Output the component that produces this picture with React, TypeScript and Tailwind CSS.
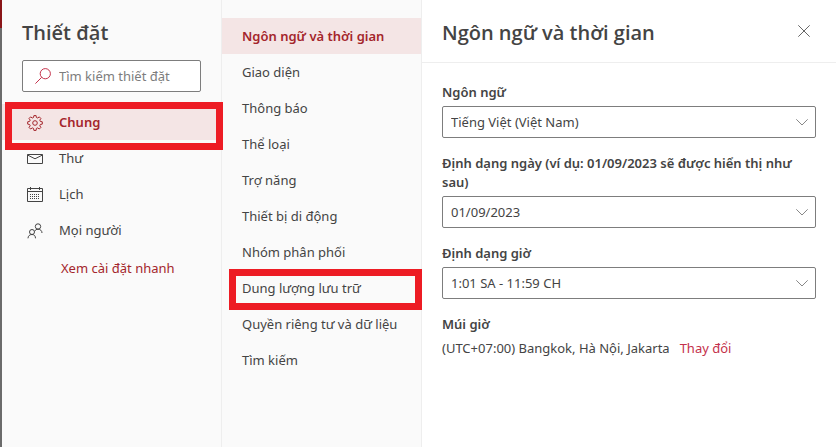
import React, { useState } from 'react';
import clsx from 'clsx';

type IconProps = { className?: string };

const GearIcon = ({ className }: IconProps) => (
  <svg className={className} width="16" height="16" viewBox="0 0 16 16" fill="none" stroke="currentColor" strokeWidth="1" strokeLinejoin="round">
    <path d="M6.900.6h2.200l.3 1.900 1.300.5 1.600-1.100 1.600 1.600-1.100 1.600.5 1.300 2 .4v2.300l-2 .4-.5 1.300 1.100 1.600-1.600 1.600-1.600-1.100-1.300.5-.3 2H6.900l-.4-2-1.200-.5L3.600 14 2 12.400l1.200-1.600-.6-1.300-1.900-.4V6.800l1.900-.4.6-1.300L2 3.500l1.600-1.600L5.300 3l1.200-.5z" />
    <circle cx="8" cy="8" r="2.3" />
  </svg>
);

const MailIcon = ({ className }: IconProps) => (
  <svg className={className} width="16" height="16" viewBox="0 0 16 16" fill="none" stroke="currentColor" strokeWidth="1">
    <path d="M.5 3.500h15v9H.5zM.5 4 8 7.800 15.500 4" />
  </svg>
);

const CalendarIcon = ({ className }: IconProps) => (
  <svg className={className} width="16" height="16" viewBox="0 0 16 16" fill="none" stroke="currentColor" strokeWidth="1">
    <path d="M.5 1.500h15v13H.5zM.5 4.500h15M3.500 0v3M12.500 0v3" />
    <path d="M3 7.500h10M3 9.500h10M3 11.500h10" strokeDasharray="1 1" />
  </svg>
);

const PeopleIcon = ({ className }: IconProps) => (
  <svg className={className} width="16" height="16" viewBox="0 0 16 16" fill="none" stroke="currentColor" strokeWidth="1">
    <circle cx="11" cy="3.500" r="2.700" />
    <circle cx="5" cy="9" r="2.500" />
    <path d="M1 15.300c0-2.300 1.700-3.800 4-3.800s3.500 1.500 3.500 3.800M7.800 8.200C8.300 6.900 9.500 6.200 11 6.200c2.300 0 4 1.500 4 3.800" />
  </svg>
);

const SearchIcon = ({ className }: IconProps) => (
  <svg className={className} width="16" height="16" viewBox="0 0 16 16" fill="none" stroke="currentColor" strokeWidth="1">
    <circle cx="10.300" cy="5.700" r="5.100" />
    <path d="M6.700 9.300.4 15.600" />
  </svg>
);

const ChevronIcon = ({ className }: IconProps) => (
  <svg className={className} width="12" height="12" viewBox="0 0 12 12" fill="none" stroke="currentColor" strokeWidth="1">
    <path d="M.3 3.300 6 9l5.700-5.700" />
  </svg>
);

const CloseIcon = ({ className }: IconProps) => (
  <svg className={className} width="12" height="12" viewBox="0 0 12 12" fill="none" stroke="currentColor" strokeWidth="1">
    <path d="M.3.3l11.400 11.400M11.700.3.3 11.700" />
  </svg>
);

const categories = [
  { name: 'Chung', Icon: GearIcon },
  { name: 'Thư', Icon: MailIcon },
  { name: 'Lịch', Icon: CalendarIcon },
  { name: 'Mọi người', Icon: PeopleIcon },
];

const sections = [
  'Ngôn ngữ và thời gian',
  'Giao diện',
  'Thông báo',
  'Thể loại',
  'Trợ năng',
  'Thiết bị di động',
  'Nhóm phân phối',
  'Dung lượng lưu trữ',
  'Quyền riêng tư và dữ liệu',
  'Tìm kiếm',
];

const fields = [
  { id: 'language', label: 'Ngôn ngữ', value: 'Tiếng Việt (Việt Nam)' },
  { id: 'date', label: 'Định dạng ngày (ví dụ: 01/09/2023 sẽ được hiển thị như sau)', value: '01/09/2023' },
  { id: 'time', label: 'Định dạng giờ', value: '1:01 SA - 11:59 CH' },
];

export default function App() {
  const [category, setCategory] = useState('Chung');
  const [section, setSection] = useState(sections[0]);

  return (
    <div className="flex min-h-screen bg-white font-['Noto_Sans','Open_Sans',sans-serif] text-[13px] text-[#444]">
      {/* Edge of the page behind the panel */}
      <div className="flex w-[2px] shrink-0 flex-col bg-[#6b6b6b]">
        <div className="h-7 bg-[#8a1518]" />
      </div>

      <aside className="w-[220px] shrink-0 border-r border-[#eee] bg-[#fafafa] pt-[18px]">
        <h1 className="px-5 font-['Open_Sans','Noto_Sans',sans-serif] text-[20px] leading-[30px] font-semibold">
          Thiết đặt
        </h1>
        <label className="mx-5 mt-3 flex h-8 items-center gap-2 rounded-xs border border-[#7d7d7d] bg-white pl-3">
          <SearchIcon className="shrink-0 text-[#c4314b]" />
          <input
            type="text"
            aria-label="Tìm kiếm thiết đặt"
            placeholder="Tìm kiếm thiết đặt"
            className="w-full min-w-0 bg-transparent pt-px outline-none placeholder:text-[#7d7d7d]"
          />
        </label>

        <ul className="mt-3">
          {categories.map(({ name, Icon }) => (
            <li key={name} className="relative">
              <button
                onClick={() => setCategory(name)}
                className={clsx(
                  'flex h-9 w-full items-center gap-4 pt-0.5 pl-[25px]',
                  category === name && 'bg-[#f4e5e5] font-semibold text-[#a4262c]'
                )}
              >
                <Icon className="shrink-0" />
                {name}
              </button>
              {name === 'Chung' && (
                <div className="pointer-events-none absolute -top-[2px] -right-[2px] -bottom-[10px] left-[3px] z-10 border-7 border-[#ed1c24]" />
              )}
            </li>
          ))}
        </ul>
        <a href="#quick" className="mt-[10px] ml-[59px] inline-block leading-5 text-[#a4262c]">
          Xem cài đặt nhanh
        </a>
      </aside>

      <nav className="w-[200px] shrink-0 border-r border-[#eee] bg-[#fafafa] pt-[18px]">
        <ul>
          {sections.map((name) => (
            <li key={name} className="relative">
              <button
                onClick={() => setSection(name)}
                className={clsx(
                  'flex h-9 w-full items-center pt-0.5 pl-5 whitespace-nowrap',
                  section === name && 'bg-[#f4e5e5] font-semibold text-[#a4262c]'
                )}
              >
                {name}
              </button>
              {name === 'Dung lượng lưu trữ' && (
                <div className="pointer-events-none absolute -top-px -right-px -bottom-1 left-[7px] z-10 border-7 border-[#ed1c24]" />
              )}
            </li>
          ))}
        </ul>
      </nav>

      <main className="min-w-0 flex-1">
        <header className="flex items-start justify-between border-b border-[#eee] pt-[18px] pr-[26px] pb-[14px] pl-5">
          <h2 className="font-['Open_Sans','Noto_Sans',sans-serif] text-[20px] leading-[30px] font-semibold">
            {section}
          </h2>
          <button aria-label="Đóng" className="pt-[7px] text-[#666]">
            <CloseIcon />
          </button>
        </header>

        <div className="flex flex-col gap-4 px-5 pt-5">
          {fields.map((field) => (
            <div key={field.id}>
              <label htmlFor={field.id} className="mb-1 block leading-[19px] font-semibold">
                {field.label}
              </label>
              <div className="relative">
                <select
                  id={field.id}
                  className="block h-8 w-full appearance-none rounded-xs border border-[#7d7d7d] bg-white pt-px pr-8 pl-2 outline-none"
                >
                  <option>{field.value}</option>
                </select>
                <ChevronIcon className="pointer-events-none absolute top-[10px] right-2 text-[#888]" />
              </div>
            </div>
          ))}
          <div>
            <h3 className="mb-[5px] leading-[19px] font-semibold">Múi giờ</h3>
            <p className="leading-[19px]">
              (UTC+07:00) Bangkok, Hà Nội, Jakarta
              <a href="#timezone" className="ml-[10px] text-[#c4314b]">
                Thay đổi
              </a>
            </p>
          </div>
        </div>
      </main>
    </div>
  );
}
